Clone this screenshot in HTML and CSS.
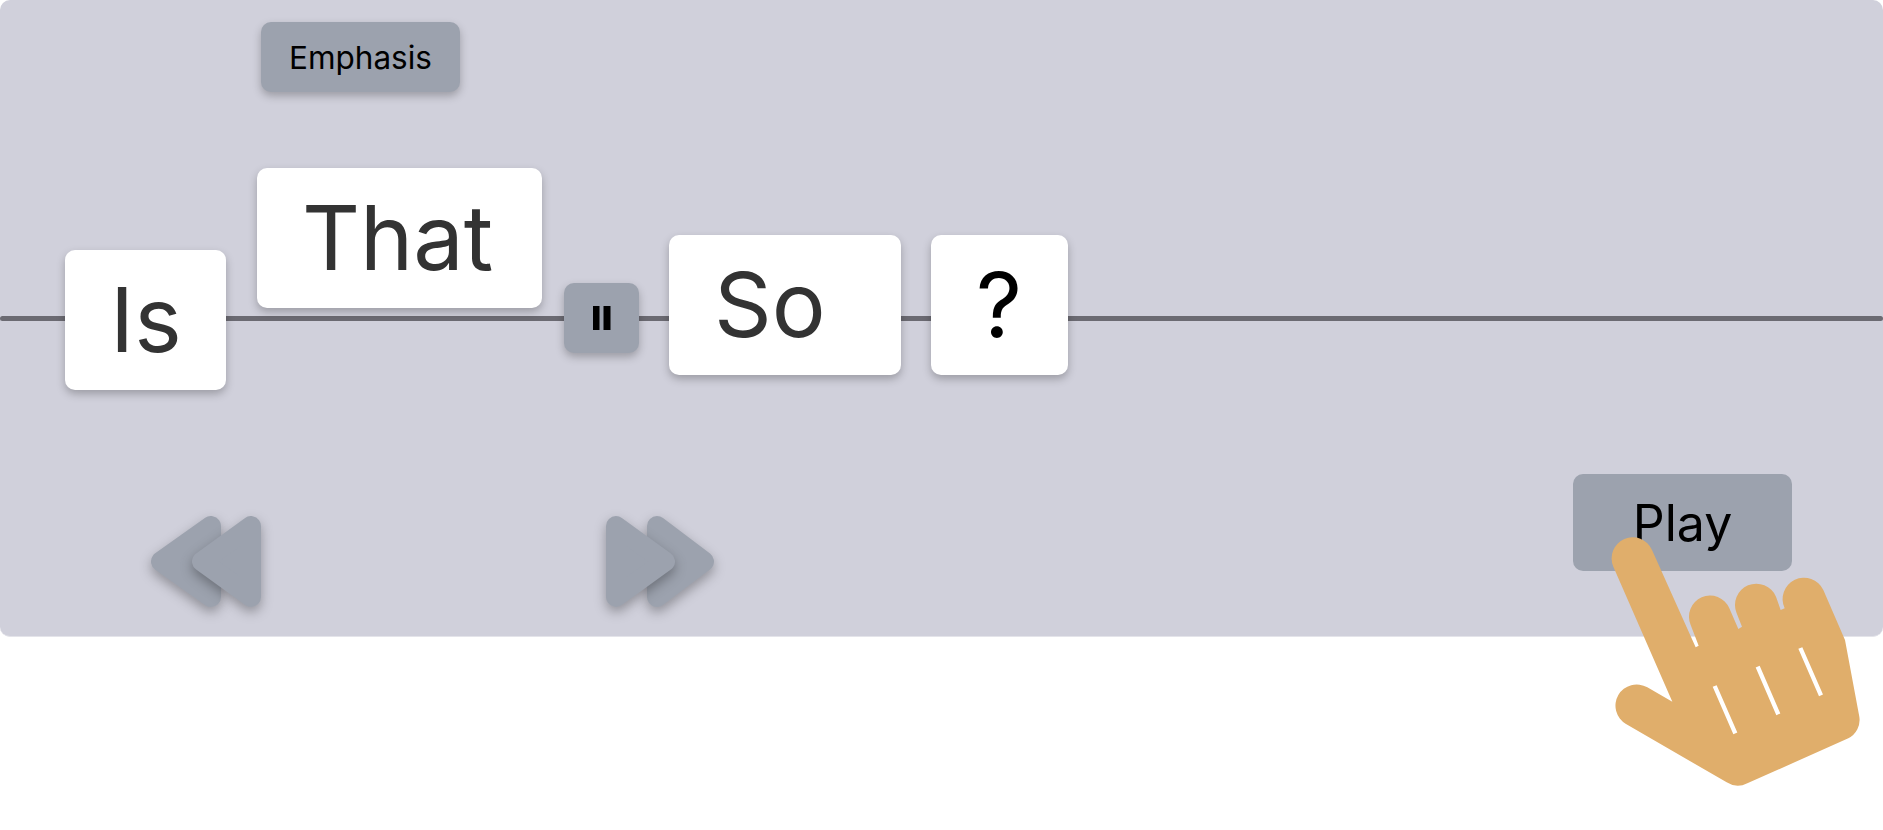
FILE: index.html
```html
<!DOCTYPE html>
<html lang="en">
<head>
  <meta charset="UTF-8">
  <title>Intonation</title>
  <link rel="stylesheet" href="styles.css">
</head>
<body>
  <div class="panel">
    <div class="line"></div>
    <div class="tag-row">
      <div class="tag">Emphasis</div>
    </div>
    <div class="words">
      <div class="word pitch-is">Is</div>
      <div class="word pitch-that">That</div>
      <div class="pause">
        <svg width="18" height="24" viewBox="0 0 18 24"><rect x="0" y="0" width="6.5" height="24"/><rect x="10.5" y="0" width="7" height="24"/></svg>
      </div>
      <div class="word pitch-so">So</div>
      <div class="word word-mark pitch-so">?</div>
    </div>
    <div class="controls">
      <svg class="skip skip-back" width="110" height="91" viewBox="0 0 110 91">
        <polygon class="tri" points="10,45.5 60,10 60,81"/>
        <polygon class="tri" points="51,45.5 100,10 100,81"/>
      </svg>
      <svg class="skip skip-next" width="108" height="91" viewBox="0 0 108 91">
        <polygon class="tri" points="51,10 98,45.5 51,81"/>
        <polygon class="tri" points="10,10 59,45.5 10,81"/>
      </svg>
      <div class="play">Play</div>
    </div>
  </div>

  <!-- pointer over the play button -->
  <svg class="hand" width="343" height="380" viewBox="0 0 1029 1140">
    <path fill="#e0ae6b" d="M220 350 A62 62 0 0 1 336 300 L467 592 L476 587 L452 525 A62 62 0 0 1 568 475 L595 537 L606 530 L590 490 A62 62 0 0 1 708 440 L722 480 L734 475 A62 62 0 0 1 850 420 L915 570 L958 800 A62 62 0 0 1 925 865 L622 1000 A62 62 0 0 1 560 997 L258 822 A62 62 0 0 1 322 712 L397 755 Z"/>
    <path stroke="#fff" stroke-width="13" d="M524 708 L586 850 M653 650 L715 793 M781 594 L843 736"/>
  </svg>
</body>
</html>
```

FILE: styles.css
```css
body {
  font-family: Inter, "Liberation Sans", sans-serif;
  background: #fff;
  margin: 0;
  height: 830px;
  overflow: hidden;
  position: relative;
}
.panel {
  position: relative;
  height: 637px;
  box-sizing: border-box;
  padding-top: 22px;
  background: #d0d0db;
  border-radius: 10px;
  border-bottom: 1px solid #e4e4ea;
}
.line {
  position: absolute;
  left: 0;
  right: 0;
  top: 316px;
  height: 5px;
  border-radius: 3px;
  background: #6b6a72;
}
.tag-row {
  position: relative;
  padding-left: 261px;
}
.tag {
  display: flex;
  align-items: center;
  justify-content: center;
  width: 199px;
  height: 70px;
  font-size: 31.5px;
  color: #000;
  background: #9ca2ae;
  border-radius: 10px;
  box-shadow: 0 4px 8px rgba(0,0,0,0.25);
}
.words {
  position: relative;
  display: flex;
  align-items: flex-start;
  margin-top: 76px;
  padding-left: 65px;
}
.word {
  box-sizing: border-box;
  height: 140px;
  padding: 0 45px;
  line-height: 140px;
  font-size: 90px;
  font-weight: 400;
  color: #333;
  background: #fff;
  border-radius: 10px;
  box-shadow: 0 4px 8px rgba(0,0,0,0.25);
}
.pitch-is {
  width: 161px;
  margin-top: 82px;
}
.pitch-that {
  width: 285px;
  margin-left: 31px;
}
.pitch-so {
  width: 232px;
  margin-top: 67px;
  margin-left: 30px;
}
.word-mark {
  width: 137px;
  color: #000;
}
.pause {
  display: flex;
  align-items: center;
  justify-content: center;
  width: 75px;
  height: 70px;
  margin-top: 115px;
  margin-left: 22px;
  background: #9ca2ae;
  border-radius: 10px;
  box-shadow: 0 4px 8px rgba(0,0,0,0.25);
}
.controls {
  display: flex;
  align-items: flex-start;
  margin-top: 84px;
  padding-left: 151px;
  padding-right: 91px;
}
.skip {
  margin-top: 42px;
  overflow: visible;
}
.skip-next {
  margin-left: 345px;
}
.tri {
  fill: #9ca2ae;
  stroke: #9ca2ae;
  stroke-width: 20;
  stroke-linejoin: round;
  filter: drop-shadow(0 5px 6px rgba(0,0,0,0.3));
}
.play {
  display: flex;
  align-items: center;
  justify-content: center;
  width: 219px;
  height: 97px;
  margin-left: auto;
  font-size: 50px;
  color: #000;
  background: #9ca2ae;
  border-radius: 10px;
}
.hand {
  position: absolute;
  left: 1540px;
  top: 450px;
}
```
